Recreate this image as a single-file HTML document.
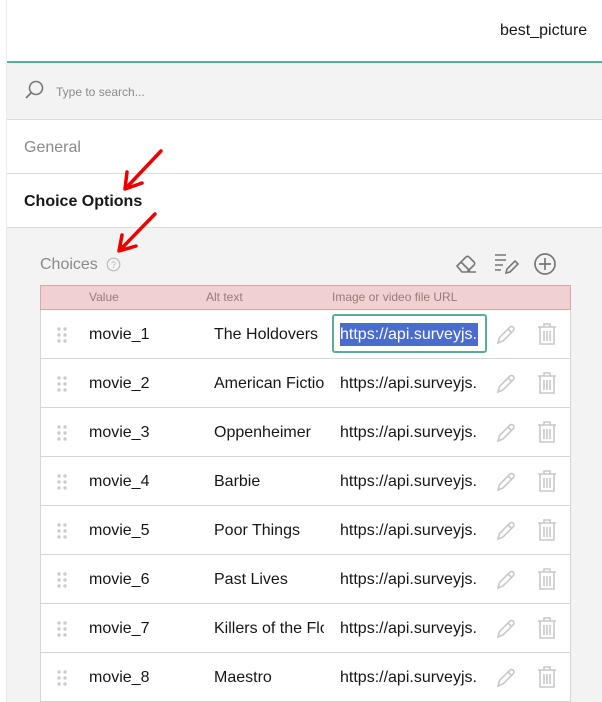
<!DOCTYPE html>
<html><head><meta charset="utf-8"><style>
*{margin:0;padding:0;box-sizing:border-box}
body{width:602px;height:702px;overflow:hidden;background:#fff;font-family:"Liberation Sans",sans-serif;position:relative}
.abs{position:absolute}
.row{position:absolute;left:40px;width:531px;height:49px;border-bottom:1px solid #d6d6d6;background:#fff;border-left:1px solid #d6d6d6;border-right:1px solid #d6d6d6}
.row span{position:absolute;top:16px;font-size:16px;color:#161616;white-space:nowrap;overflow:hidden}
.v{left:48px}.a{left:173px;width:110px}.u{left:299px;width:138px}
.dots{position:absolute;left:16px;top:17px}
.ic{position:absolute;top:12px}
</style></head><body>
<div class="abs" style="left:0;top:0;width:7px;height:702px;background:#fff;border-right:1px solid #ececec"></div>
<div class="abs" style="left:7px;top:0;width:595px;height:61px;background:#fff"></div>
<div class="abs" style="left:500px;top:22px;font-size:16px;color:#161616">best_picture</div>
<div class="abs" style="left:7px;top:61px;width:595px;height:2px;background:#5aaf92"></div>
<div class="abs" style="left:7px;top:63px;width:595px;height:57px;background:#f3f3f3;border-bottom:1px solid #dcdcdc"></div>
<svg class="abs" style="left:24px;top:80px" width="22" height="20" viewBox="0 0 22 20"><circle cx="12" cy="8" r="6.5" fill="none" stroke="#777" stroke-width="1.6"/><path d="M7.5 12.5L2 18" stroke="#777" stroke-width="1.8"/></svg>
<div class="abs" style="left:56px;top:85px;font-size:12px;color:#8a8a8a">Type to search...</div>
<div class="abs" style="left:7px;top:120px;width:595px;height:54px;background:#fff;border-bottom:1px solid #dcdcdc"></div>
<div class="abs" style="left:24px;top:139px;font-size:16px;color:#8a8a8a">General</div>
<div class="abs" style="left:7px;top:174px;width:595px;height:54px;background:#fff;border-bottom:1px solid #dcdcdc"></div>
<div class="abs" style="left:24px;top:193px;font-size:16px;font-weight:bold;color:#161616">Choice Options</div>
<div class="abs" style="left:7px;top:228px;width:595px;height:474px;background:#f3f3f3"></div>
<svg class="abs" style="left:0;top:0" width="200" height="270"><path d="M161 151L126 188M127 172L125 189L142 183" fill="none" stroke="#e00" stroke-width="3.5" stroke-linecap="round" stroke-linejoin="round"/><path d="M155 214L120 250M122 235L119 251L136 246" fill="none" stroke="#e00" stroke-width="3.5" stroke-linecap="round" stroke-linejoin="round"/></svg>
<div class="abs" style="left:40px;top:256px;font-size:16px;color:#8a8a8a">Choices</div>
<svg class="abs" style="left:106px;top:257px" width="15" height="15"><circle cx="7.5" cy="7.5" r="6.3" fill="none" stroke="#bbb" stroke-width="1.2"/><text x="7.5" y="11" font-size="9" text-anchor="middle" fill="#bbb" font-family="Liberation Sans">?</text></svg>
<svg class="abs" style="left:454px;top:252px" width="26" height="24" viewBox="0 0 26 24"><path d="M3 14L12 5a2 2 0 0 1 3 0l5 5a2 2 0 0 1 0 3l-7 7H8z" fill="none" stroke="#777" stroke-width="1.6"/><path d="M7 10l9 9M14 20h8" stroke="#777" stroke-width="1.6"/></svg>
<svg class="abs" style="left:494px;top:253px" width="26" height="22" viewBox="0 0 26 22"><path d="M1 2h11M1 7h11M1 12h8M1 17h6" stroke="#777" stroke-width="1.6"/><path d="M12 20l1-4 8-8 3 3-8 8z" fill="none" stroke="#777" stroke-width="1.6"/></svg>
<svg class="abs" style="left:533px;top:252px" width="24" height="24"><circle cx="12" cy="12" r="10" fill="none" stroke="#777" stroke-width="1.7"/><path d="M12 6v12M6 12h12" stroke="#777" stroke-width="1.7"/></svg>
<div class="abs" style="left:40px;top:285px;width:531px;height:25px;background:#f0d0d1;border:1px solid #d8a8a8"></div>
<div class="abs" style="left:89px;top:290px;font-size:12px;color:#9a7a7a">Value</div>
<div class="abs" style="left:206px;top:290px;font-size:12px;color:#9a7a7a">Alt text</div>
<div class="abs" style="left:332px;top:290px;font-size:12px;color:#9a7a7a">Image or video file URL</div>

<div id="rows"></div>
<script>
var d=[["movie_1","The Holdovers"],["movie_2","American Fiction"],["movie_3","Oppenheimer"],["movie_4","Barbie"],["movie_5","Poor Things"],["movie_6","Past Lives"],["movie_7","Killers of the Flower Moon"],["movie_8","Maestro"]];
var h="";
d.forEach(function(r,i){
var t=310+49*i;
h+='<div class="row" style="top:'+t+'px">'+
'<svg class="dots" width="10" height="16"><g fill="#ccc"><circle cx="2" cy="2" r="1.7"/><circle cx="8" cy="2" r="1.7"/><circle cx="2" cy="8" r="1.7"/><circle cx="8" cy="8" r="1.7"/><circle cx="2" cy="14" r="1.7"/><circle cx="8" cy="14" r="1.7"/></g></svg>'+
'<span class="v">'+r[0]+'</span><span class="a">'+r[1]+'</span>'+
(i==0?'<div style="position:absolute;left:291px;top:4px;width:155px;height:39px;border:2px solid #5aaf92;border-radius:3px"></div><span class="u" style="background:#4a6bd0;color:#fff;top:13px;height:23px;line-height:23px">https://api.surveyjs.io</span>':'<span class="u">https://api.surveyjs.io</span>')+
'<svg class="ic" style="left:454px" width="22" height="24" viewBox="0 0 22 24"><path d="M3 21l1.5-5.5L15 5a2.5 2.5 0 0 1 3.5 3.5L8 19z" fill="none" stroke="#c8c8c8" stroke-width="1.6"/><path d="M13 7l3.5 3.5" stroke="#c8c8c8" stroke-width="1.6"/></svg>'+
'<svg class="ic" style="left:495px" width="22" height="24" viewBox="0 0 22 24"><path d="M2 5h18M8 5V2h6v3M4 5v17h14V5M8 9v10M11 9v10M14 9v10" fill="none" stroke="#c8c8c8" stroke-width="1.6"/></svg>'+
'</div>';});
document.getElementById("rows").innerHTML=h;
</script>
</body></html>
